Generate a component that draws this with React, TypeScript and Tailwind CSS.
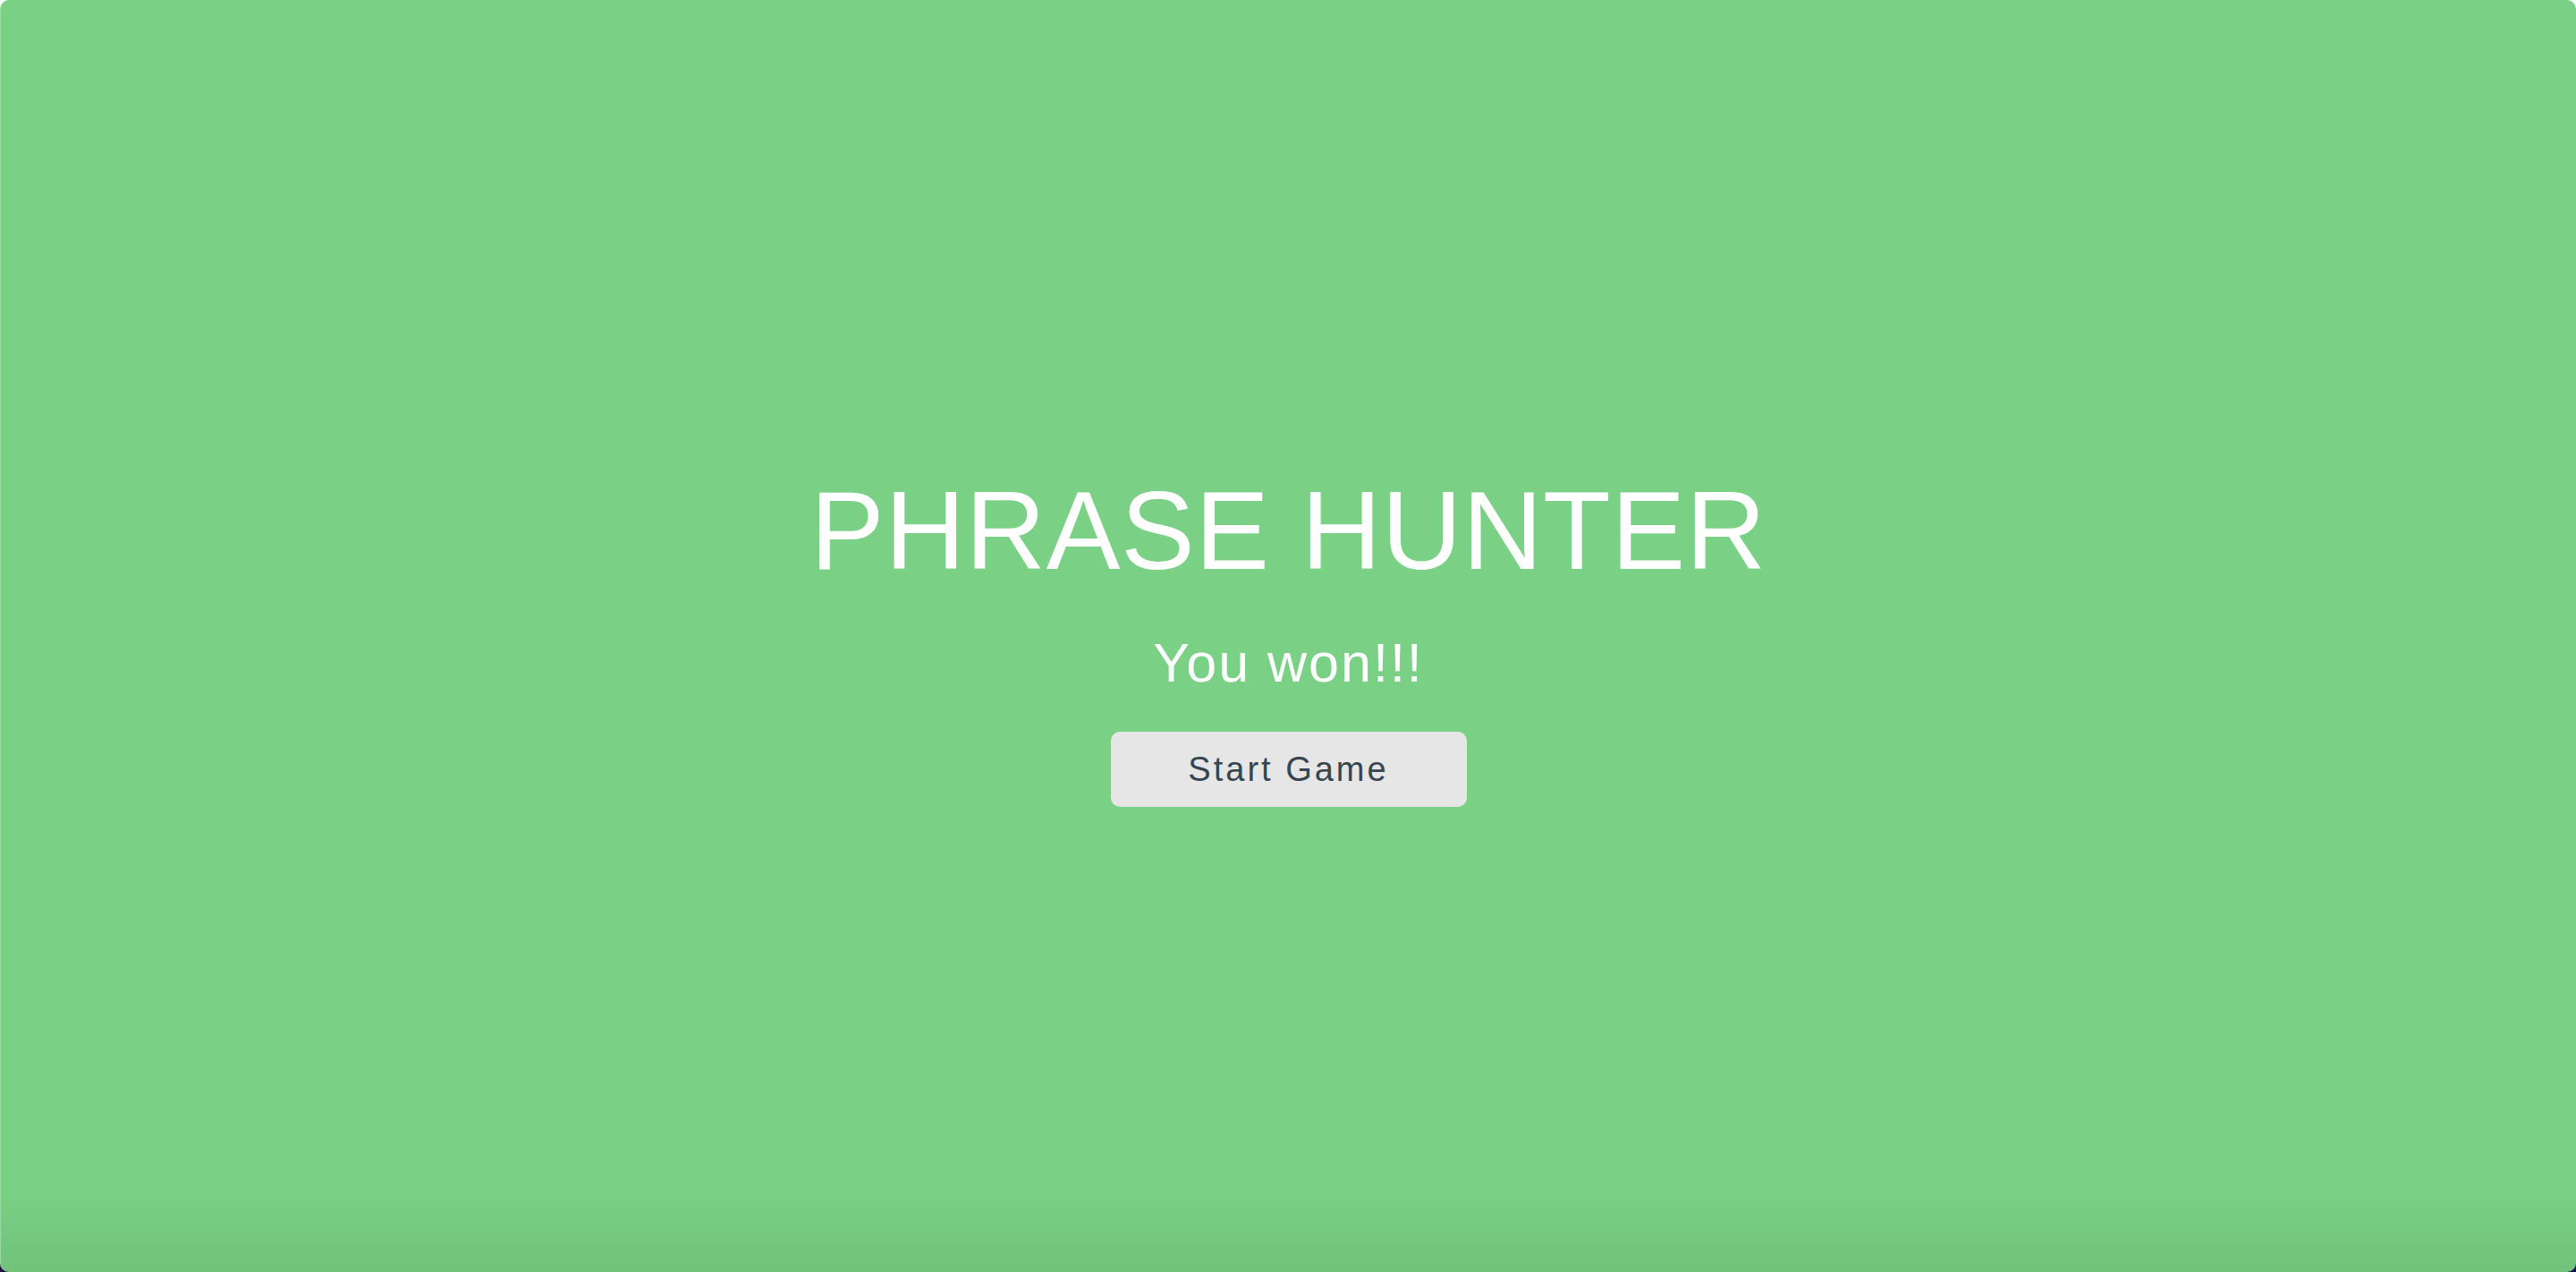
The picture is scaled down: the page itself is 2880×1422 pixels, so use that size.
export default function App() {
  return (
    <div className="h-screen w-full bg-gradient-to-b from-white via-white to-[#1b1446]">
      <div className="relative h-full w-full overflow-hidden rounded-[10px] border-l border-[#9ad9a2] bg-[#7ad085] font-['Liberation_Sans',Arial,sans-serif]">
        {/* window shadow along the bottom edge */}
        <div
          aria-hidden
          className="pointer-events-none absolute inset-x-0 bottom-0 h-[90px] bg-gradient-to-b from-transparent to-black/[0.07]"
        />

        <main className="relative flex flex-col items-center pt-[531px]">
          <h1 className="text-[124px] leading-none font-normal tracking-[0.6px] text-white">
            PHRASE HUNTER
          </h1>
          <p className="mt-[56px] text-[61px] leading-none tracking-[2px] text-white">
            You won!!!
          </p>
          <button
            type="button"
            className="mt-[46px] flex h-[84px] w-[398px] items-center justify-center rounded-[10px] bg-[#e6e6e6] text-[38px] leading-none tracking-[3px] text-[#36454f]"
          >
            Start Game
          </button>
        </main>
      </div>
    </div>
  );
}
